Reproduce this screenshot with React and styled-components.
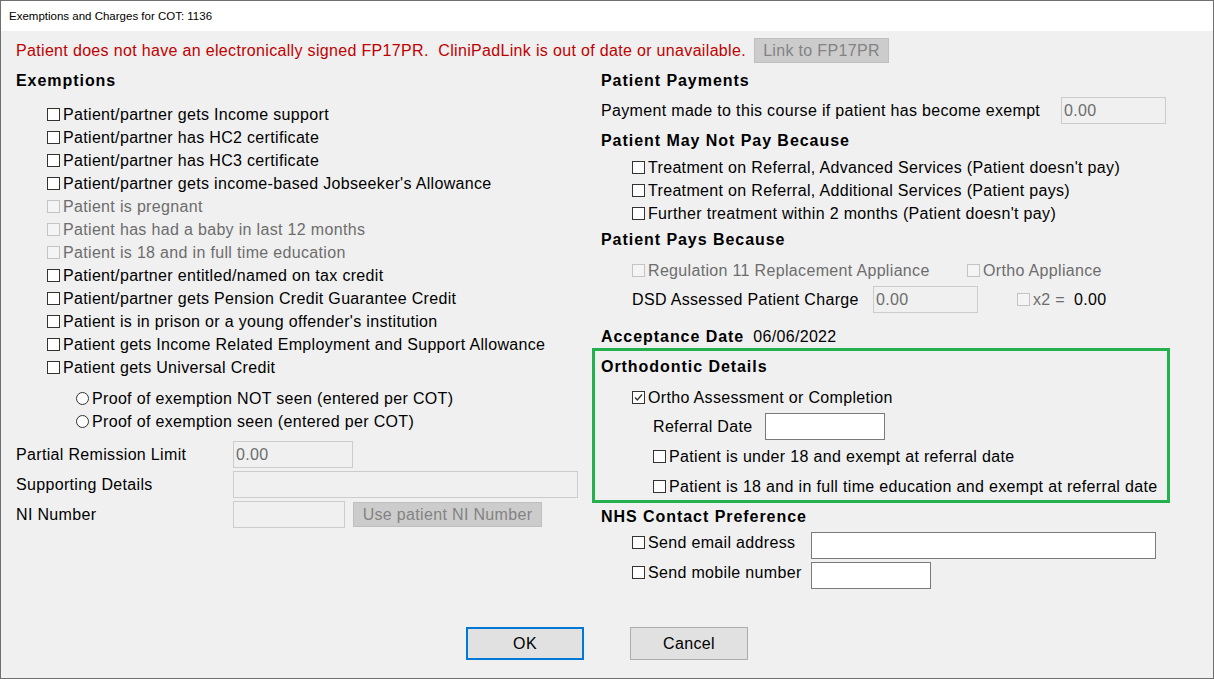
import React from 'react'
import styled, { createGlobalStyle } from 'styled-components'

const GlobalStyle = createGlobalStyle`
  html, body {
    margin: 0;
    padding: 0;
    background: #f0f0f0;
  }
  body {
    font-family: "Liberation Sans", Arial, sans-serif;
    font-size: 16px;
    letter-spacing: 0.33px;
    color: #000;
  }
`

const Window = styled.div`
  width: 1214px;
  height: 679px;
  box-sizing: border-box;
  border: 1px solid #6f6f6f;
  background: #f0f0f0;
  display: flex;
  flex-direction: column;
  overflow: hidden;
`

const TitleBar = styled.div`
  height: 30px;
  flex-shrink: 0;
  background: #fff;
  display: flex;
  align-items: center;
  padding-left: 8px;
  font-family: "Liberation Sans", Arial, sans-serif;
  font-size: 11.5px;
  letter-spacing: 0;
  color: #000;
`

const Body = styled.div`
  padding: 7px 0 0 15px;
  display: flex;
  flex-direction: column;
`

const MessageRow = styled.div`
  height: 25px;
  display: flex;
  align-items: center;
  gap: 8px;
`

const Warning = styled.span`
  color: #c00000;
  white-space: pre;
`

const Columns = styled.div`
  display: grid;
  grid-template-columns: 585px 1fr;
`

const Column = styled.div`
  display: flex;
  flex-direction: column;
`

const Heading = styled.div`
  height: 23px;
  display: flex;
  align-items: center;
  gap: 9px;
  font-weight: bold;
  letter-spacing: 0.95px;
  margin-top: ${p => p.$mt || 0}px;
`

const Plain = styled.span`
  font-weight: normal;
  letter-spacing: 0.33px;
`

const CheckRow = styled.div`
  height: 23px;
  display: flex;
  align-items: center;
  padding-left: ${p => p.$indent || 0}px;
  margin-top: ${p => p.$mt || 0}px;
  color: ${p => (p.$disabled ? '#6d6d6d' : '#000')};
`

const CheckItem = styled.span`
  display: flex;
  align-items: center;
  gap: 3px;
  width: ${p => (p.$width ? `${p.$width}px` : 'auto')};
  color: ${p => (p.$disabled ? '#6d6d6d' : 'inherit')};
`

const Box = styled.span`
  width: 13px;
  height: 13px;
  box-sizing: border-box;
  border: 1px solid ${p => (p.$disabled ? '#c4c4c4' : '#333')};
  background: ${p => (p.$disabled ? '#f4f4f4' : '#fff')};
  display: inline-flex;
  align-items: center;
  justify-content: center;
  flex-shrink: 0;
`

const Radio = styled.span`
  width: 13px;
  height: 13px;
  box-sizing: border-box;
  border: 1px solid #333;
  border-radius: 50%;
  background: #fff;
  flex-shrink: 0;
`

const FieldRow = styled.div`
  height: 27px;
  display: flex;
  align-items: center;
  padding-left: ${p => p.$indent || 0}px;
  margin-top: ${p => p.$mt || 0}px;
`

const Label = styled.span`
  width: ${p => p.$width}px;
  flex-shrink: 0;
  display: flex;
  align-items: center;
  gap: 3px;
  padding-bottom: ${p => p.$raise || 0}px;
`

const Input = styled.div`
  width: ${p => p.$width}px;
  height: ${p => p.$height || 27}px;
  box-sizing: border-box;
  border: 1px solid ${p => (p.$disabled ? '#cccccc' : '#7a7a7a')};
  background: ${p => (p.$disabled ? '#f0f0f0' : '#fff')};
  color: #6d6d6d;
  display: flex;
  align-items: center;
  padding-left: 2px;
  flex-shrink: 0;
`

const GrayButton = styled.div`
  width: ${p => p.$width}px;
  height: 25px;
  box-sizing: border-box;
  margin-left: ${p => p.$ml || 0}px;
  border: 1px solid #bfbfbf;
  background: #cccccc;
  color: #838383;
  display: flex;
  align-items: center;
  justify-content: center;
  flex-shrink: 0;
`

const Spacer = styled.span`
  width: ${p => p.$width}px;
  flex-shrink: 0;
`

const GrayText = styled.span`
  color: #6d6d6d;
  margin-left: 3px;
  width: ${p => p.$width}px;
`

const GreenBox = styled.div`
  margin-left: -9px;
  width: 578px;
  box-sizing: border-box;
  border: 3px solid #22b14c;
  padding: 0 0 2px 6px;
  display: flex;
  flex-direction: column;
`

const ButtonBar = styled.div`
  margin-top: 38px;
  display: flex;
  justify-content: center;
  gap: 46px;
  padding-right: 15px;
`

const DialogButton = styled.div`
  width: 118px;
  height: 33px;
  box-sizing: border-box;
  border: ${p => (p.$default ? '2px solid #0078d7' : '1px solid #adadad')};
  background: #e1e1e1;
  display: flex;
  align-items: center;
  justify-content: center;
`

function Check({ checked, disabled }) {
  return (
    <Box $disabled={disabled}>
      {checked && (
        <svg width="11" height="11" viewBox="0 0 11 11">
          <polyline points="2,5.5 4.3,8 9,2.5" fill="none" stroke="#333" strokeWidth="1.3" />
        </svg>
      )}
    </Box>
  )
}

function CheckLine({ text, indent, mt, disabled, checked }) {
  return (
    <CheckRow $indent={indent} $mt={mt} $disabled={disabled}>
      <CheckItem>
        <Check disabled={disabled} checked={checked} />
        {text}
      </CheckItem>
    </CheckRow>
  )
}

const exemptions = [
  ['Patient/partner gets Income support'],
  ['Patient/partner has HC2 certificate'],
  ['Patient/partner has HC3 certificate'],
  ["Patient/partner gets income-based Jobseeker's Allowance"],
  ['Patient is pregnant', true],
  ['Patient has had a baby in last 12 months', true],
  ['Patient is 18 and in full time education', true],
  ['Patient/partner entitled/named on tax credit'],
  ['Patient/partner gets Pension Credit Guarantee Credit'],
  ["Patient is in prison or a young offender's institution"],
  ['Patient gets Income Related Employment and Support Allowance'],
  ['Patient gets Universal Credit'],
]

const mayNotPay = [
  "Treatment on Referral, Advanced Services (Patient doesn't pay)",
  'Treatment on Referral, Additional Services (Patient pays)',
  "Further treatment within 2 months (Patient doesn't pay)",
]

export default function App() {
  return (
    <>
      <GlobalStyle />
      <Window>
        <TitleBar>Exemptions and Charges for COT: 1136</TitleBar>
        <Body>
          <MessageRow>
            <Warning>Patient does not have an electronically signed FP17PR.  CliniPadLink is out of date or unavailable.</Warning>
            <GrayButton $width={135}>Link to FP17PR</GrayButton>
          </MessageRow>
          <Columns>
            <Column>
              <Heading $mt={6}>Exemptions</Heading>
              {exemptions.map(([text, disabled], i) => (
                <CheckLine key={text} text={text} disabled={disabled} indent={31} mt={i === 0 ? 11 : 0} />
              ))}
              <CheckRow $indent={60} $mt={8}>
                <CheckItem><Radio />Proof of exemption NOT seen (entered per COT)</CheckItem>
              </CheckRow>
              <CheckRow $indent={60}>
                <CheckItem><Radio />Proof of exemption seen (entered per COT)</CheckItem>
              </CheckRow>
              <FieldRow $mt={8}>
                <Label $width={217}>Partial Remission Limit</Label>
                <Input $width={120} $disabled>0.00</Input>
              </FieldRow>
              <FieldRow $mt={3}>
                <Label $width={217}>Supporting Details</Label>
                <Input $width={345} $disabled />
              </FieldRow>
              <FieldRow $mt={3}>
                <Label $width={217}>NI Number</Label>
                <Input $width={112} $disabled />
                <GrayButton $width={189} $ml={8}>Use patient NI Number</GrayButton>
              </FieldRow>
            </Column>

            <Column>
              <Heading $mt={6}>Patient Payments</Heading>
              <FieldRow $mt={5}>
                <Label $width={460}>Payment made to this course if patient has become exempt</Label>
                <Input $width={105} $disabled>0.00</Input>
              </FieldRow>
              <Heading $mt={5}>Patient May Not Pay Because</Heading>
              {mayNotPay.map((text, i) => (
                <CheckLine key={text} text={text} indent={31} mt={i === 0 ? 4 : 0} />
              ))}
              <Heading $mt={3}>Patient Pays Because</Heading>
              <CheckRow $indent={31} $mt={8}>
                <CheckItem $width={335} $disabled>
                  <Check disabled />Regulation 11 Replacement Appliance
                </CheckItem>
                <CheckItem $disabled>
                  <Check disabled />Ortho Appliance
                </CheckItem>
              </CheckRow>
              <FieldRow $indent={31} $mt={4}>
                <Label $width={241}>DSD Assessed Patient Charge</Label>
                <Input $width={105} $disabled>0.00</Input>
                <Spacer $width={39} />
                <Check disabled />
                <GrayText $width={41}>x2 =</GrayText>
                <span>0.00</span>
              </FieldRow>
              <Heading $mt={12}>
                Acceptance Date <Plain>06/06/2022</Plain>
              </Heading>
              <GreenBox>
                <Heading $mt={4}>Orthodontic Details</Heading>
                <CheckLine text="Ortho Assessment or Completion" indent={31} mt={8} checked />
                <FieldRow $indent={52} $mt={4}>
                  <Label $width={112}>Referral Date</Label>
                  <Input $width={120} />
                </FieldRow>
                <CheckLine text="Patient is under 18 and exempt at referral date" indent={52} mt={5} />
                <CheckLine text="Patient is 18 and in full time education and exempt at referral date" indent={52} mt={7} />
              </GreenBox>
              <Heading $mt={2}>NHS Contact Preference</Heading>
              <FieldRow $indent={31} $mt={4}>
                <Label $width={179} $raise={6}><Check />Send email address</Label>
                <Input $width={345} />
              </FieldRow>
              <FieldRow $indent={31} $mt={3}>
                <Label $width={179} $raise={6}><Check />Send mobile number</Label>
                <Input $width={120} />
              </FieldRow>
            </Column>
          </Columns>
          <ButtonBar>
            <DialogButton $default>OK</DialogButton>
            <DialogButton>Cancel</DialogButton>
          </ButtonBar>
        </Body>
      </Window>
    </>
  )
}
